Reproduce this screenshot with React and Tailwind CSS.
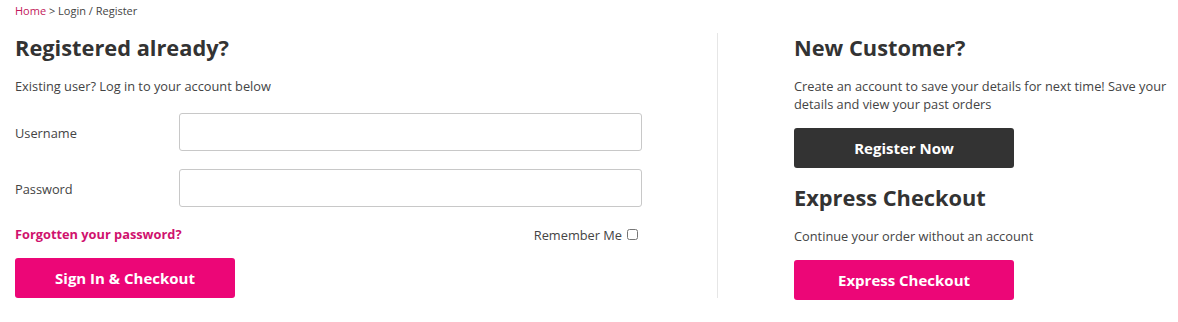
import { useState } from 'react';

export default function App() {
    const [remember, setRemember] = useState(false);

    return (
        <div className="w-[1178px] h-[322px] bg-white text-[#333] font-['Open_Sans',sans-serif]">
            <div className="px-[15px] pt-[3px] text-[11px] leading-[16px] text-[#444]">
                <a href="#" className="text-[#c2185b]">Home</a> &gt; Login / Register
            </div>

            <div className="flex pl-[15px] mt-[14px]">
                {/* left: login */}
                <div className="w-[627px] flex flex-col">
                    <h2 className="text-[21.8px] leading-[30px] font-bold text-[#333]">Registered already?</h2>
                    <p className="mt-[14px] text-[12.8px] leading-[18px] text-[#444]">Existing user? Log in to your account below</p>

                    <div className="mt-[18px] flex items-center">
                        <label className="w-[164px] pt-[3px] text-[12.8px] text-[#444]">Username</label>
                        <input type="text" className="flex-1 h-[38px] border border-[#c8c8c8] rounded-[3px] px-2" />
                    </div>
                    <div className="mt-[18px] flex items-center">
                        <label className="w-[164px] pt-[3px] text-[12.8px] text-[#444]">Password</label>
                        <input type="password" className="flex-1 h-[38px] border border-[#c8c8c8] rounded-[3px] px-2" />
                    </div>

                    <div className="mt-[18px] h-[18px] flex justify-between items-center text-[12.8px] leading-[18px]">
                        <a href="#" className="font-bold text-[#d0126e]">Forgotten your password?</a>
                        <label className="flex items-center gap-[5px] pt-[1px] text-[#444] mr-[4px]">
                            Remember Me
                            <input type="checkbox" checked={remember} onChange={() => setRemember(!remember)} className="w-[11px] h-[11px]" />
                        </label>
                    </div>

                    <button className="mt-[15px] w-[220px] h-[40px] rounded-[3px] bg-[#ec0677] text-white text-[15px] font-bold">Sign In &amp; Checkout</button>
                </div>

                {/* divider */}
                <div className="ml-[75px] w-px h-[265px] bg-[#e6e6e6]"></div>

                {/* right: register / express */}
                <div className="ml-[76px] w-[378px] flex flex-col">
                    <h2 className="text-[21.8px] leading-[30px] font-bold text-[#333]">New Customer?</h2>
                    <p className="mt-[14px] text-[12.8px] leading-[18px] text-[#444]">Create an account to save your details for next time! Save your details and view your past orders</p>
                    <button className="mt-[15px] w-[220px] h-[40px] rounded-[3px] bg-[#333] text-white text-[15px] font-bold">Register Now</button>

                    <h2 className="mt-[15px] text-[21.8px] leading-[30px] font-bold text-[#333]">Express Checkout</h2>
                    <p className="mt-[14px] text-[12.8px] leading-[18px] text-[#444]">Continue your order without an account</p>
                    <button className="mt-[15px] w-[220px] h-[40px] rounded-[3px] bg-[#ec0677] text-white text-[15px] font-bold">Express Checkout</button>
                </div>
            </div>
        </div>
    )
}
